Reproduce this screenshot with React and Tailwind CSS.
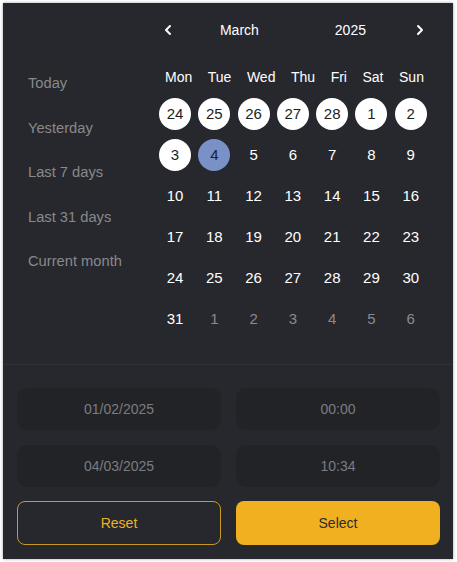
import { ChevronLeft, ChevronRight } from 'lucide-react'

const presets = ['Today', 'Yesterday', 'Last 7 days', 'Last 31 days', 'Current month']
const weekdays = ['Mon', 'Tue', 'Wed', 'Thu', 'Fri', 'Sat', 'Sun']

// range is Feb 24 -> Mar 4, other month tail at the end
const days = [
    ...[24, 25, 26, 27, 28].map((d) => ({ d, kind: 'range' })),
    ...[1, 2, 3].map((d) => ({ d, kind: 'range' })),
    { d: 4, kind: 'end' },
    ...Array.from({ length: 27 }, (_, i) => ({ d: i + 5, kind: 'day' })),
    ...[1, 2, 3, 4, 5, 6].map((d) => ({ d, kind: 'next' })),
]

function Day({ day }) {
    if (day.kind === 'range') {
        return (
            <div className="flex h-[32px] w-[32px] items-center justify-center rounded-full bg-white text-[#1d1d1f]">
                {day.d}
            </div>
        )
    }
    if (day.kind === 'end') {
        return (
            <div className="flex h-[32px] w-[32px] items-center justify-center rounded-full bg-[#7991c6] text-[#1d1f26]">
                {day.d}
            </div>
        )
    }
    return <span className={day.kind === 'next' ? 'text-[#8a8a8d]' : 'text-white'}>{day.d}</span>
}

export default function App() {
    return (
        <div className="min-h-[562px] bg-white p-[3px] font-['Liberation_Sans',Arial,sans-serif]">
            <div className="w-[450px] bg-[#27282d] shadow-[0_0_3px_rgba(0,0,0,0.35)]">
                <div className="flex h-[362px] border-b border-[#2f3035]">
                    <div className="w-[152.4px] pl-[25px] pt-[58px]">
                        {presets.map((p) => (
                            <div key={p} className="flex h-[44.5px] items-center text-[14.7px] text-[#88898c]">
                                {p}
                            </div>
                        ))}
                    </div>
                    <div className="w-[275px]">
                        <div className="mt-[7px] flex h-[40px] items-center text-[14px] text-white">
                            <div className="flex w-[26px] shrink-0 justify-center">
                                <ChevronLeft size={16} strokeWidth={3} />
                            </div>
                            <div className="w-[116px] shrink-0 text-center">March</div>
                            <div className="w-[106px] shrink-0 text-center">2025</div>
                            <div className="ml-[4px] flex w-[26px] shrink-0 justify-center">
                                <ChevronRight size={16} strokeWidth={3} />
                            </div>
                        </div>
                        <div className="ml-[9.6px] mt-[10.5px] flex h-[33px] w-[259px] items-center justify-between text-[14px] text-white">
                            {weekdays.map((w) => (
                                <span key={w}>{w}</span>
                            ))}
                        </div>
                        <div className="grid grid-cols-7 text-[15px] text-white">
                            {days.map((day, i) => (
                                <div key={i} className="flex h-[41px] items-center justify-center">
                                    <Day day={day} />
                                </div>
                            ))}
                        </div>
                    </div>
                </div>
                <div className="grid grid-cols-2 gap-x-[15px] pb-[14px] pl-[14px] pr-[13px] pt-[23px] text-[14px]">
                    <div className="flex h-[42px] items-center justify-center rounded-[10px] bg-[#222327] text-[#7b7c80]">01/02/2025</div>
                    <div className="flex h-[42px] items-center justify-center rounded-[10px] bg-[#222327] text-[#7b7c80]">00:00</div>
                    <div className="mt-[15px] flex h-[42px] items-center justify-center rounded-[10px] bg-[#222327] text-[#7b7c80]">04/03/2025</div>
                    <div className="mt-[15px] flex h-[42px] items-center justify-center rounded-[10px] bg-[#222327] text-[#7b7c80]">10:34</div>
                    <button className="mt-[14px] flex h-[44px] items-center justify-center rounded-[8px] border border-[#c89a22] text-[#efb120]">
                        Reset
                    </button>
                    <button className="mt-[14px] flex h-[44px] items-center justify-center rounded-[8px] bg-[#f0b01f] text-[#2b2b2d]">
                        Select
                    </button>
                </div>
            </div>
        </div>
    )
}
